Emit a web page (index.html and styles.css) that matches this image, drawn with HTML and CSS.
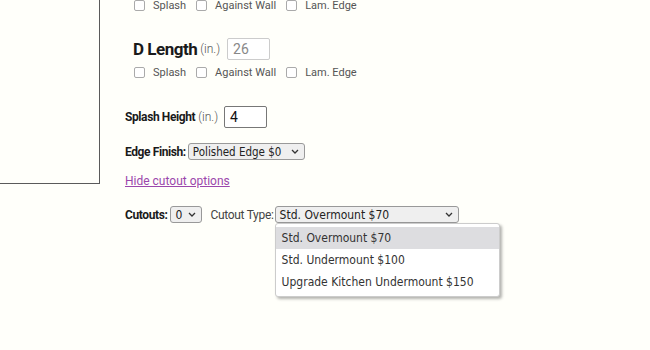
FILE: index.html
```html
<!DOCTYPE html>
<html lang="en">
<head>
  <meta charset="UTF-8">
  <meta name="viewport" content="width=device-width, initial-scale=1.0">
  <title>Countertop Options</title>
  <link rel="stylesheet" href="styles.css">
</head>
<body>
  <div class="page">
    <div class="side"></div>

    <div class="form">
      <div class="length first">
        <div class="checks">
          <span class="check"><span class="box"></span>Splash</span>
          <span class="check"><span class="box"></span>Against Wall</span>
          <span class="check"><span class="box"></span>Lam. Edge</span>
        </div>
      </div>

      <div class="length">
        <div class="len-row">
          <span class="len-label">D Length</span>
          <span class="unit">(in.)</span>
          <span class="input muted">26</span>
        </div>
        <div class="checks">
          <span class="check"><span class="box"></span>Splash</span>
          <span class="check"><span class="box"></span>Against Wall</span>
          <span class="check"><span class="box"></span>Lam. Edge</span>
        </div>
      </div>

      <div class="row splash-row">
        <span class="label">Splash Height</span>
        <span class="unit small">(in.)</span>
        <span class="input">4</span>
      </div>

      <div class="row edge-row">
        <span class="label">Edge Finish:</span>
        <span class="select edge-select">
          <span class="sel-text">Polished Edge $0</span>
          <svg class="chev" width="8" height="5" viewBox="0 0 8 5"><path d="M1 1l3 3 3-3" fill="none" stroke="#333" stroke-width="1.3"/></svg>
        </span>
      </div>

      <a class="toggle" href="#">Hide cutout options</a>

      <div class="row cutout-row">
        <span class="label">Cutouts:</span>
        <span class="select count-select">
          <span class="sel-text">0</span>
          <svg class="chev" width="8" height="5" viewBox="0 0 8 5"><path d="M1 1l3 3 3-3" fill="none" stroke="#333" stroke-width="1.3"/></svg>
        </span>
        <span class="plain">Cutout Type:</span>
        <div class="type-wrap">
          <span class="select type-select">
            <span class="sel-text">Std. Overmount $70</span>
            <svg class="chev" width="8" height="5" viewBox="0 0 8 5"><path d="M1 1l3 3 3-3" fill="none" stroke="#333" stroke-width="1.3"/></svg>
          </span>
          <div class="dropdown">
            <div class="option active">Std. Overmount $70</div>
            <div class="option">Std. Undermount $100</div>
            <div class="option">Upgrade Kitchen Undermount $150</div>
          </div>
        </div>
      </div>
    </div>
  </div>
</body>
</html>
```
FILE: styles.css
```css
body { margin: 0; background: #fffffa; font-family: Roboto, "Liberation Sans", sans-serif; color: #222; }
.page { display: flex; padding-bottom: 120px; }
.side { width: 100px; height: 184px; box-sizing: border-box; border-right: 1px solid #5a5a5a; border-bottom: 1px solid #5a5a5a; flex: none; }
.form { padding-left: 25px; display: flex; flex-direction: column; align-items: flex-start; }

.length { padding-left: 8px; margin-bottom: 27px; }
.length.first .checks { margin-top: 0; height: 11px; }
.len-row { display: flex; align-items: center; height: 22px; }
.len-label { font-size: 17px; font-weight: 700; letter-spacing: -0.5px; color: #1a1a1a; }
.unit { font-size: 12px; font-weight: 300; color: #555; margin-left: 3px; margin-right: 7px; }
.unit.small { margin-left: 3px; margin-right: 6px; }
.input { display: inline-flex; align-items: center; width: 43px; height: 22px; box-sizing: border-box; padding-left: 5px; border: 1px solid #777; border-radius: 2px; background: #fff; font-size: 14px; color: #111; }
.input.muted { border-color: #ccc; color: #888; }

.checks { display: flex; align-items: center; height: 13px; margin-top: 6px; padding-left: 1px; }
.check { display: inline-flex; align-items: center; font-size: 11px; color: #555; margin-right: 10px; }
.box { width: 11px; height: 11px; box-sizing: border-box; border: 1px solid #aaa; border-radius: 2px; background: #fff; margin-right: 8px; }

.row { display: flex; align-items: center; }
.label { font-size: 12px; font-weight: 700; letter-spacing: -0.4px; color: #1a1a1a; }
.splash-row { height: 22px; }
.edge-row { margin-top: 15px; height: 17px; }
.edge-row .label { margin-right: 2px; }

.select { display: inline-flex; align-items: center; justify-content: space-between; height: 17px; box-sizing: border-box; padding: 0 5px 0 4px; border: 1px solid #999; border-radius: 3px; background: #efefef; font-family: "DejaVu Sans Condensed", "DejaVu Sans", sans-serif; font-size: 12px; color: #222; }
.chev { flex: none; }
.edge-select { width: 117px; font-size: 11.5px; }
.count-select { width: 32px; margin-left: 3px; margin-right: 8px; }
.type-select { width: 184px; }

.toggle { margin-top: 14px; font-size: 12px; color: #9b47ac; line-height: 14px; }

.cutout-row { margin-top: 18px; height: 17px; }
.plain { font-size: 12px; color: #444; letter-spacing: -0.3px; margin-right: 1px; }
.type-wrap { position: relative; display: flex; }

.dropdown { position: absolute; left: 0; top: 17px; z-index: 10; width: 225px; padding: 3px 0; box-sizing: border-box; background: #fff; border: 1px solid #ccc; border-radius: 3px; box-shadow: 2px 2px 3px rgba(0, 0, 0, 0.3); font-family: "DejaVu Sans Condensed", "DejaVu Sans", sans-serif; font-size: 12px; color: #333; }
.option { height: 22px; line-height: 22px; padding-left: 6px; white-space: nowrap; }
.option.active { background: #dddde0; }
```
